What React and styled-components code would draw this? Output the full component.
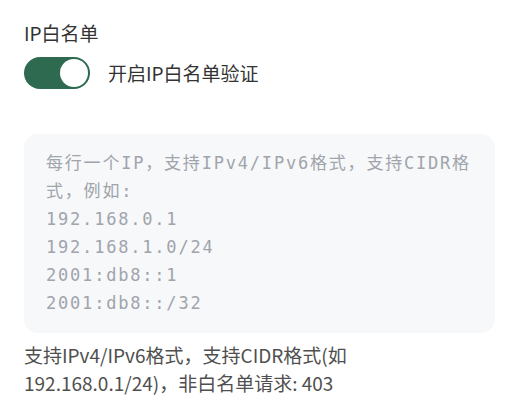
import React from "react";
import styled, { createGlobalStyle } from "styled-components";

const GlobalStyle = createGlobalStyle`
  body {
    margin: 0;
    background: #fff;
    font-family: "Noto Sans CJK SC", "Noto Sans", sans-serif;
  }
`;

const PLACEHOLDER =
  "每行一个IP，支持IPv4/IPv6格式，支持CIDR格式，例如:\n192.168.0.1\n192.168.1.0/24\n2001:db8::1\n2001:db8::/32";

const App = () => {
  return (
    <>
      <GlobalStyle />
      <Page>
        <Title>IP白名单</Title>
        <SwitchRow>
          <Switch $on>
            <Knob $on />
          </Switch>
          <SwitchLabel>开启IP白名单验证</SwitchLabel>
        </SwitchRow>
        <IpList readOnly placeholder={PLACEHOLDER} />
        <Hint>
          支持IPv4/IPv6格式，支持CIDR格式(如 192.168.0.1/24)，非白名单请求: 403
        </Hint>
      </Page>
    </>
  );
};

export default App;

const Page = styled.div`
  padding: 19px 28px 0 24px;
  display: flex;
  flex-direction: column;
`;

const Title = styled.div`
  font-size: 19px;
  line-height: 28px;
  color: #333;
`;

const SwitchRow = styled.div`
  margin-top: 10px;
  display: flex;
  align-items: center;
  gap: 18px;
`;

const Switch = styled.div`
  position: relative;
  width: 66px;
  height: 32px;
  border-radius: 16px;
  background: ${(p) => (p.$on ? "#2e6a4f" : "#d0d4d9")};
  flex-shrink: 0;
`;

const Knob = styled.span`
  position: absolute;
  top: 2px;
  left: ${(p) => (p.$on ? "36px" : "2px")};
  width: 28px;
  height: 28px;
  border-radius: 50%;
  background: #fff;
`;

const SwitchLabel = styled.span`
  font-size: 19px;
  line-height: 28px;
  color: #333;
`;

const IpList = styled.textarea`
  margin-top: 45px;
  box-sizing: border-box;
  width: 100%;
  height: 199px;
  padding: 15px 22px;
  border: none;
  outline: none;
  border-radius: 14px;
  background: #f7f8fa;
  resize: none;
  font-family: "DejaVu Sans Mono", "Noto Sans CJK SC", monospace;
  font-size: 17px;
  letter-spacing: 1.8px;
  line-height: 28px;
  color: #333;

  &::placeholder {
    color: #a0a4ab;
  }
`;

const Hint = styled.div`
  margin-top: 8px;
  font-size: 19px;
  line-height: 28px;
  color: #4f4f4f;
`;
